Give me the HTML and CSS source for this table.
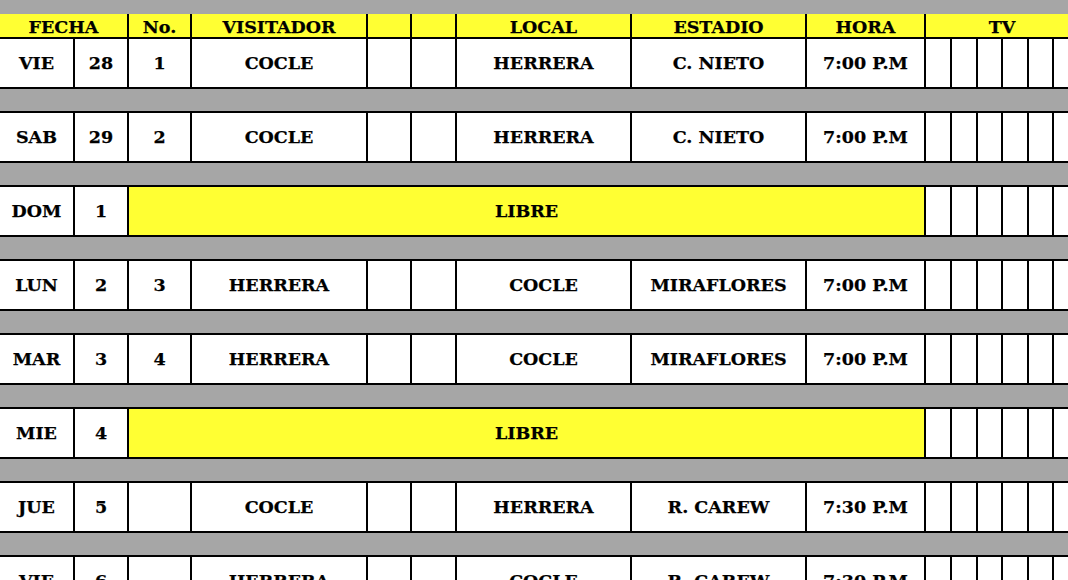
FILE: index.html
```html
<!DOCTYPE html>
<html lang="es">
<head>
<meta charset="utf-8">
<title>Calendario</title>
<link rel="stylesheet" href="styles.css">
</head>
<body>
<div class="sheet">
  <div class="grid head">
    <div class="c span-fecha">FECHA</div>
    <div class="c">No.</div>
    <div class="c">VISITADOR</div>
    <div class="c"></div>
    <div class="c"></div>
    <div class="c">LOCAL</div>
    <div class="c">ESTADIO</div>
    <div class="c">HORA</div>
    <div class="c span-tv">TV</div>
  </div>

  <div class="grid row">
    <div class="c">VIE</div><div class="c">28</div><div class="c">1</div><div class="c">COCLE</div><div class="c"></div><div class="c"></div><div class="c">HERRERA</div><div class="c">C. NIETO</div><div class="c">7:00 P.M</div>
    <div class="c"></div><div class="c"></div><div class="c"></div><div class="c"></div><div class="c"></div><div class="c"></div>
  </div>
  <div class="grid row">
    <div class="c">SAB</div><div class="c">29</div><div class="c">2</div><div class="c">COCLE</div><div class="c"></div><div class="c"></div><div class="c">HERRERA</div><div class="c">C. NIETO</div><div class="c">7:00 P.M</div>
    <div class="c"></div><div class="c"></div><div class="c"></div><div class="c"></div><div class="c"></div><div class="c"></div>
  </div>
  <div class="grid row">
    <div class="c">DOM</div><div class="c">1</div><div class="c libre">LIBRE</div>
    <div class="c"></div><div class="c"></div><div class="c"></div><div class="c"></div><div class="c"></div><div class="c"></div>
  </div>
  <div class="grid row">
    <div class="c">LUN</div><div class="c">2</div><div class="c">3</div><div class="c">HERRERA</div><div class="c"></div><div class="c"></div><div class="c">COCLE</div><div class="c">MIRAFLORES</div><div class="c">7:00 P.M</div>
    <div class="c"></div><div class="c"></div><div class="c"></div><div class="c"></div><div class="c"></div><div class="c"></div>
  </div>
  <div class="grid row">
    <div class="c">MAR</div><div class="c">3</div><div class="c">4</div><div class="c">HERRERA</div><div class="c"></div><div class="c"></div><div class="c">COCLE</div><div class="c">MIRAFLORES</div><div class="c">7:00 P.M</div>
    <div class="c"></div><div class="c"></div><div class="c"></div><div class="c"></div><div class="c"></div><div class="c"></div>
  </div>
  <div class="grid row">
    <div class="c">MIE</div><div class="c">4</div><div class="c libre">LIBRE</div>
    <div class="c"></div><div class="c"></div><div class="c"></div><div class="c"></div><div class="c"></div><div class="c"></div>
  </div>
  <div class="grid row">
    <div class="c">JUE</div><div class="c">5</div><div class="c"></div><div class="c">COCLE</div><div class="c"></div><div class="c"></div><div class="c">HERRERA</div><div class="c">R. CAREW</div><div class="c">7:30 P.M</div>
    <div class="c"></div><div class="c"></div><div class="c"></div><div class="c"></div><div class="c"></div><div class="c"></div>
  </div>
  <div class="grid row">
    <div class="c">VIE</div><div class="c">6</div><div class="c"></div><div class="c">HERRERA</div><div class="c"></div><div class="c"></div><div class="c">COCLE</div><div class="c">R. CAREW</div><div class="c">7:30 P.M</div>
    <div class="c"></div><div class="c"></div><div class="c"></div><div class="c"></div><div class="c"></div><div class="c"></div>
  </div>
</div>
</body>
</html>
```

FILE: styles.css
```css
html, body {
  margin: 0;
  padding: 0;
}
body {
  background: #a6a6a6;
  width: 1068px;
  height: 580px;
  overflow: hidden;
  font-family: "DejaVu Serif", "Liberation Serif", serif;
  font-weight: bold;
  font-size: 17.5px;
  color: #000;
  -webkit-text-stroke: 0.25px #000;
}
.sheet {
  padding-top: 14px;
  width: max-content;
}
.grid {
  display: grid;
  grid-template-columns: 73px 52px 61px 174px 42px 43px 173px 173px 117px 24px 24px 23px 24px 23px 24px;
  column-gap: 2px;
  background: #000;
}
.c {
  display: flex;
  align-items: center;
  justify-content: center;
  white-space: nowrap;
  background: #fff;
}
.head {
  height: 23px;
}
.head .c {
  background: #ffff33;
  padding-top: 2px;
}
.span-fecha {
  grid-column: 1 / 3;
}
.span-tv {
  grid-column: 10 / -1;
}
.row {
  height: 48px;
  border-top: 2px solid #000;
  border-bottom: 2px solid #000;
  margin-bottom: 22px;
}
.libre {
  grid-column: 3 / 10;
  background: #ffff33;
}
```
